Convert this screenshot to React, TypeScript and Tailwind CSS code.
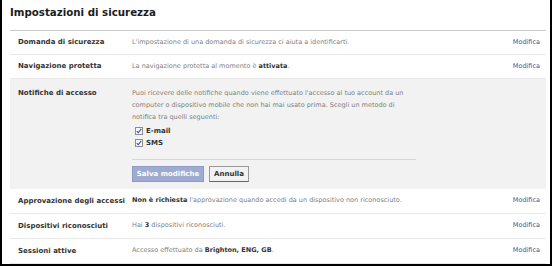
const font = { fontFamily: '"DejaVu Sans", Tahoma, sans-serif' };

interface RowProps {
  label: string;
  children: React.ReactNode;
  tall?: boolean;
}

const Row = ({ label, children, tall }: RowProps) => (
  <div className={`flex items-center ${tall ? "h-[25px]" : "h-[24px]"} pl-[8px] pr-[6px] border-b border-[#e9e9e9]`}>
    <div className="w-[114px] shrink-0 font-bold text-[7px] text-[#333]">{label}</div>
    <div className="flex-1 text-[6.5px] text-[#808080]">{children}</div>
    <a className="text-[6.5px] text-[#3b5998]">Modifica</a>
  </div>
);

const Check = ({ label }: { label: string }) => (
  <label className="flex items-center h-[12px] pl-[3px] gap-[3px]">
    <span className="w-[8px] h-[8px] border border-[#8d8d8d] bg-[#f4f6fb] flex items-center justify-center">
      <svg viewBox="0 0 8 8" className="w-[6px] h-[6px]">
        <path d="M1 4.2 L3 6.3 L7 1.2" fill="none" stroke="#2f4f9c" strokeWidth="1.4" />
      </svg>
    </span>
    <span className="font-bold text-[7px] text-[#333]">{label}</span>
  </label>
);

export default function App() {
  return (
    <div className="w-[552px] h-[268px] bg-white" style={font}>
      <div className="h-[266px] border-l-2 border-r-2 border-b-2 border-black pl-[8px] pr-[4px]">
        <div className="h-[31px] border-b border-[#c8c8c8] flex items-center pb-[5px]">
          <h1 className="text-[10.25px] font-bold text-[#1c1c1c]">Impostazioni di sicurezza</h1>
        </div>

        <Row label="Domanda di sicurezza">
          L'impostazione di una domanda di sicurezza ci aiuta a identificarti.
        </Row>
        <Row label="Navigazione protetta">
          La navigazione protetta al momento è <b className="text-[#333]">attivata</b>.
        </Row>

        <div className="bg-[#f2f2f2] flex pl-[8px] pt-[8px] pb-[7px] h-[110px]">
          <div className="w-[114px] shrink-0 font-bold text-[7px] text-[#333] leading-[12px]">Notifiche di accesso</div>
          <div className="flex-1">
            <p className="text-[6.5px] text-[#808080] leading-[12px] whitespace-nowrap">
              Puoi ricevere delle notifiche quando viene effettuato l'accesso al tuo account da un
              <br />
              computer o dispositivo mobile che non hai mai usato prima. Scegli un metodo di
              <br />
              notifica tra quelli seguenti:
            </p>
            <div className="mt-[2px]">
              <Check label="E-mail" />
              <Check label="SMS" />
            </div>
            <div className="mt-[10px] w-[284px] border-t border-[#d6d6d6]" />
            <div className="mt-[6px] flex gap-[5px]">
              <button className="h-[16px] w-[72px] bg-[#9eaad0] border border-[#8d9bc6] text-white font-bold text-[7px]">
                Salva modifiche
              </button>
              <button className="h-[16px] w-[40px] bg-[#f2f2f2] border border-[#999] border-b-[#666] text-[#333] font-bold text-[7px]">
                Annulla
              </button>
            </div>
          </div>
        </div>

        <Row label="Approvazione degli accessi" tall>
          <b className="text-[#333]">Non è richiesta</b> l'approvazione quando accedi da un dispositivo non riconosciuto.
        </Row>
        <Row label="Dispositivi riconosciuti" tall>
          Hai <b className="text-[#333]">3</b> dispositivi riconosciuti.
        </Row>
        <Row label="Sessioni attive" tall>
          Accesso effettuato da <b className="text-[#333]">Brighton, ENG, GB</b>.
        </Row>
      </div>
    </div>
  );
}
